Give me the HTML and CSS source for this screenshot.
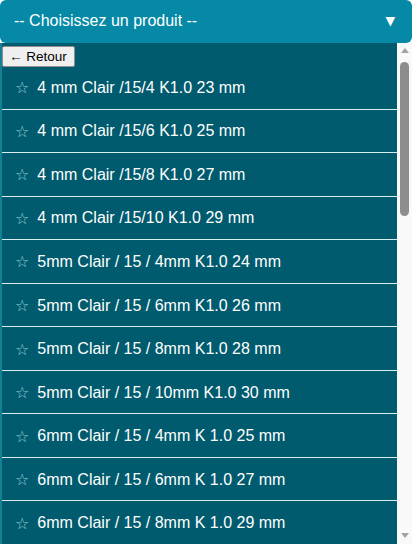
FILE: index.html
```html
<!DOCTYPE html>
<html lang="fr">
<head>
<meta charset="utf-8">
<title>Choisissez un produit</title>
<link rel="stylesheet" href="styles.css">
</head>
<body>
<div class="picker">
  <div class="head">
    <span class="head-label">-- Choisissez un produit --</span>
    <span class="caret">▼</span>
  </div>
  <div class="panel">
    <div class="list">
      <div class="back"><button class="back-btn">← Retour</button></div>
      <ul class="items">
        <li class="item"><span class="star">☆</span><span>4 mm Clair /15/4 K1.0 23 mm</span></li>
        <li class="item"><span class="star">☆</span><span>4 mm Clair /15/6 K1.0 25 mm</span></li>
        <li class="item"><span class="star">☆</span><span>4 mm Clair /15/8 K1.0 27 mm</span></li>
        <li class="item"><span class="star">☆</span><span>4 mm Clair /15/10 K1.0 29 mm</span></li>
        <li class="item"><span class="star">☆</span><span>5mm Clair / 15 / 4mm K1.0 24 mm</span></li>
        <li class="item"><span class="star">☆</span><span>5mm Clair / 15 / 6mm K1.0 26 mm</span></li>
        <li class="item"><span class="star">☆</span><span>5mm Clair / 15 / 8mm K1.0 28 mm</span></li>
        <li class="item"><span class="star">☆</span><span>5mm Clair / 15 / 10mm K1.0 30 mm</span></li>
        <li class="item"><span class="star">☆</span><span>6mm Clair / 15 / 4mm K 1.0 25 mm</span></li>
        <li class="item"><span class="star">☆</span><span>6mm Clair / 15 / 6mm K 1.0 27 mm</span></li>
        <li class="item"><span class="star">☆</span><span>6mm Clair / 15 / 8mm K 1.0 29 mm</span></li>
      </ul>
    </div>
    <div class="scrollbar">
      <span class="arrow-up"></span>
      <span class="thumb"></span>
      <span class="arrow-down"></span>
    </div>
  </div>
</div>
</body>
</html>
```

FILE: styles.css
```css
html, body {
  margin: 0;
  padding: 0;
  background: #ffffff;
  overflow: hidden;
}

body {
  font-family: "Liberation Sans", Arial, sans-serif;
  height: 544px;
}

.picker {
  width: 412px;
  display: flex;
  flex-direction: column;
  height: 544px;
}

.head {
  height: 43px;
  flex: none;
  box-sizing: border-box;
  background: #0589a6;
  border-radius: 6px;
  color: #ffffff;
  display: flex;
  align-items: center;
  justify-content: space-between;
  padding: 0 17px 1px 14px;
  font-size: 16px;
}

.caret {
  font-family: "DejaVu Sans", sans-serif;
  font-size: 12.5px;
  line-height: 1;
}

.panel {
  flex: 1;
  display: flex;
  min-height: 0;
  overflow: hidden;
}

.list {
  flex: 1;
  min-width: 0;
  background: #005b6e;
  border-left: 2px solid #157f93;
  overflow: hidden;
}

.back {
  height: 23px;
  box-sizing: border-box;
  padding-top: 3px;
}

.back-btn {
  display: block;
  font-family: "Liberation Sans", Arial, sans-serif;
  font-size: 13.5px;
  height: 21px;
  line-height: 17px;
  padding: 0 7px 0 6px;
  margin: 0;
  background: #efefef;
  color: #000000;
  border: 1px solid #8f8f8f;
  border-radius: 2px;
}

.items {
  list-style: none;
  margin: 0;
  padding: 0;
}

.item {
  height: 43.56px;
  box-sizing: border-box;
  border-bottom: 1px solid #d6eef0;
  display: flex;
  align-items: center;
  padding: 1px 0 0 13px;
  color: #ffffff;
  font-size: 16px;
}

.star {
  font-family: "DejaVu Sans", sans-serif;
  color: #8ccad3;
  font-size: 16px;
  margin-right: 8px;
}

.scrollbar {
  width: 15px;
  flex: none;
  background: #f9f9f9;
  display: flex;
  flex-direction: column;
  align-items: center;
}

.arrow-up {
  margin-top: 5px;
  width: 0;
  height: 0;
  border-left: 4px solid transparent;
  border-right: 4px solid transparent;
  border-bottom: 5px solid #a3a3a3;
}

.thumb {
  margin-top: 9px;
  width: 9px;
  height: 154px;
  border-radius: 5px;
  background: #8d8d8d;
}

.arrow-down {
  margin-top: auto;
  margin-bottom: 6px;
  width: 0;
  height: 0;
  border-left: 4px solid transparent;
  border-right: 4px solid transparent;
  border-top: 5px solid #a3a3a3;
}
```
